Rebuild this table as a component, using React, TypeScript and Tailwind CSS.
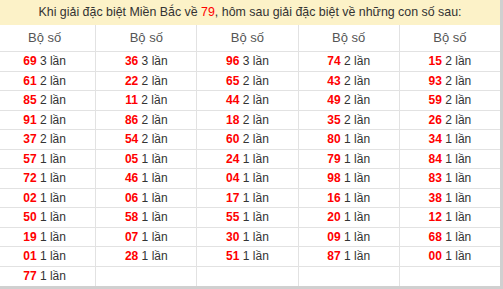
import React from 'react';

const COLUMNS: [string, number][][] = [
  [['69', 3], ['61', 2], ['85', 2], ['91', 2], ['37', 2], ['57', 1], ['72', 1], ['02', 1], ['50', 1], ['19', 1], ['01', 1], ['77', 1]],
  [['36', 3], ['22', 2], ['11', 2], ['86', 2], ['54', 2], ['05', 1], ['46', 1], ['06', 1], ['58', 1], ['07', 1], ['28', 1]],
  [['96', 3], ['65', 2], ['44', 2], ['18', 2], ['60', 2], ['24', 1], ['04', 1], ['17', 1], ['55', 1], ['30', 1], ['51', 1]],
  [['74', 2], ['43', 2], ['49', 2], ['35', 2], ['80', 1], ['79', 1], ['98', 1], ['16', 1], ['20', 1], ['09', 1], ['87', 1]],
  [['15', 2], ['93', 2], ['59', 2], ['26', 2], ['34', 1], ['84', 1], ['83', 1], ['38', 1], ['12', 1], ['68', 1], ['00', 1]],
];

const ROWS = 12;

export default function App() {
  const rows = Array.from({ length: ROWS }, (_, r) => COLUMNS.map((col) => col[r]));
  return (
    <div
      className="w-[503px] h-[289px] overflow-hidden bg-white"
      style={{ fontFamily: '"Liberation Sans", Arial, sans-serif' }}>
      <div className="-ml-[6px] w-[509px] border-r-[3px] border-b-[3px] border-[#d0d0d0]">
        <div className="h-[25px] bg-[#fcf2c8] flex items-center justify-center text-[12.4px] text-[#333] pl-[6px]">
          Khi giải đặc biệt Miền Bắc về&nbsp;<span className="text-[#ff0000]">79</span>, hôm sau giải đặc biệt về những con số sau:
        </div>
        <div className="grid grid-cols-5 h-[27px] border-b border-[#e2e2e2]">
          {COLUMNS.map((_, i) => (
            <div
              key={i}
              className={`flex items-center justify-center text-[13px] text-[#555] ${i > 0 ? 'border-l border-[#e2e2e2]' : ''}`}>
              Bộ số
            </div>
          ))}
        </div>
        {rows.map((row, r) => (
          <div
            key={r}
            className={`grid grid-cols-5 h-[19.5px] ${r < ROWS - 1 ? 'border-b border-[#e2e2e2]' : ''}`}>
            {row.map((cell, i) => (
              <div
                key={i}
                className={`flex items-center justify-center text-[12px] text-[#333] ${i > 0 ? 'border-l border-[#e2e2e2]' : ''}`}>
                {cell &&
                <>
                    <span className="text-[#ff0000] font-bold">{cell[0]}</span>
                    &nbsp;{cell[1]} lần
                  </>
                }
              </div>
            ))}
          </div>
        ))}
      </div>
    </div>);

}
